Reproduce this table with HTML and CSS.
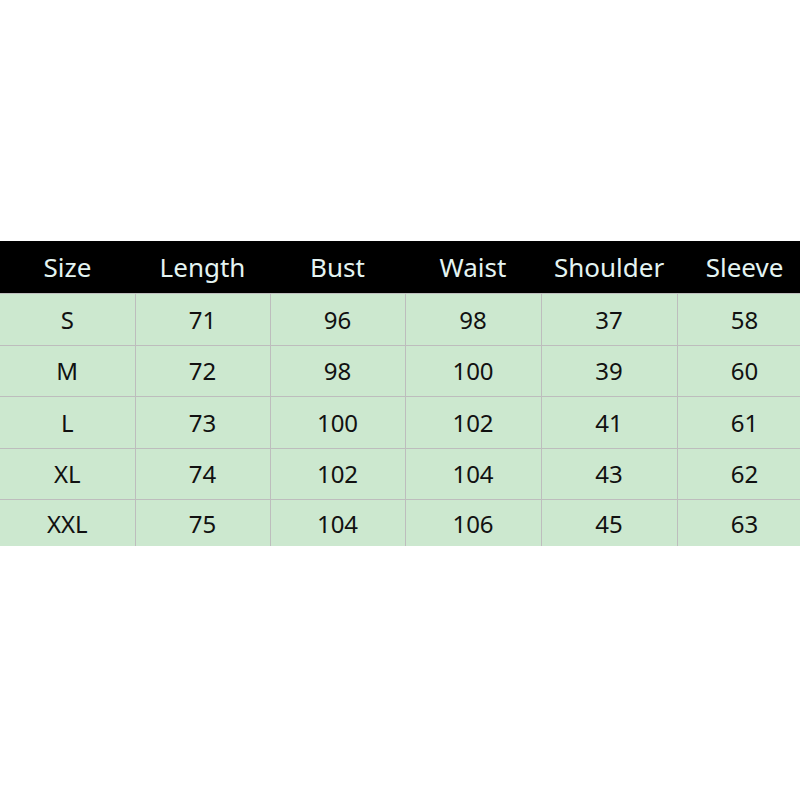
FILE: index.html
```html
<!DOCTYPE html>
<html>
<head>
<meta charset="utf-8">
<link rel="stylesheet" href="styles.css">
</head>
<body>
<div class="page">
  <table class="size-table">
    <colgroup>
      <col class="c1"><col class="c2"><col class="c3"><col class="c4"><col class="c5"><col class="c6">
    </colgroup>
    <thead>
      <tr><th>Size</th><th>Length</th><th>Bust</th><th>Waist</th><th>Shoulder</th><th>Sleeve</th></tr>
    </thead>
    <tbody>
      <tr><td>S</td><td>71</td><td>96</td><td>98</td><td>37</td><td>58</td></tr>
      <tr><td>M</td><td>72</td><td>98</td><td>100</td><td>39</td><td>60</td></tr>
      <tr><td>L</td><td>73</td><td>100</td><td>102</td><td>41</td><td>61</td></tr>
      <tr><td>XL</td><td>74</td><td>102</td><td>104</td><td>43</td><td>62</td></tr>
      <tr class="last"><td>XXL</td><td>75</td><td>104</td><td>106</td><td>45</td><td>63</td></tr>
    </tbody>
  </table>
</div>
</body>
</html>
```
FILE: styles.css
```css
html, body {
  margin: 0;
  padding: 0;
  background: #ffffff;
}
.page {
  width: 800px;
  height: 800px;
  overflow: hidden;
  padding-top: 241px;
  box-sizing: border-box;
}
.size-table {
  width: 812px;
  border-collapse: collapse;
  table-layout: fixed;
  font-family: "Noto Sans", "Open Sans", sans-serif;
}
.c1, .c2, .c3 { width: 135px; }
.c4, .c5 { width: 136px; }
.c6 { width: 135px; }
.size-table th {
  background: #000000;
  color: #e4f4f2;
  font-weight: 400;
  font-size: 26px;
  height: 52px;
  padding: 0;
  text-align: center;
  vertical-align: middle;
}
.size-table td {
  background: #cce8cf;
  color: #111111;
  font-size: 24px;
  height: 50.5px;
  padding: 0;
  text-align: center;
  vertical-align: middle;
  border-left: 1px solid #bdbdbd;
  border-right: 1px solid #bdbdbd;
  border-top: 1px solid #bdbdbd;
}
.size-table td:first-child { border-left: none; }
.size-table tr.last td { height: 46px; }
```
